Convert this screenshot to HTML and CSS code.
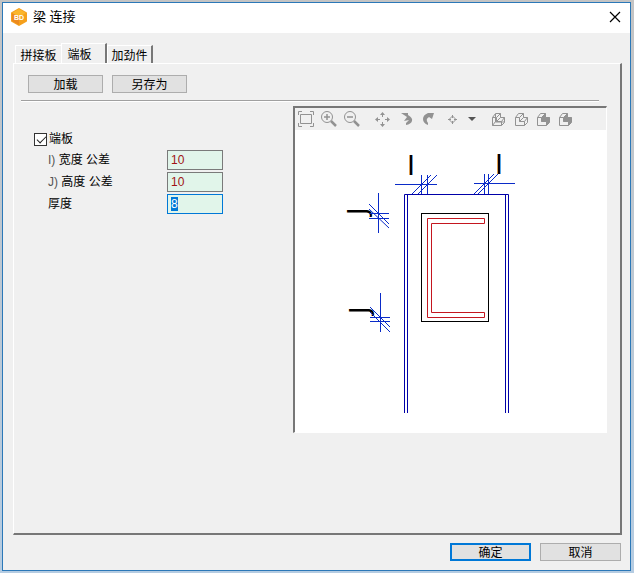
FILE: index.html
```
<!DOCTYPE html>
<html lang="zh-CN">
<head>
  <meta charset="UTF-8">
  <meta name="viewport" content="width=device-width, initial-scale=1.0">
  <title>梁 连接</title>
  <link rel="stylesheet" href="styles.css">
</head>
<body>
  <form class="window">
    <header class="titlebar">
      <svg class="logo" width="16" height="18" viewBox="0 0 16 18">
        <path d="M8 1 L15 5 V13 L8 17 L1 13 V5 Z" fill="#f5a01c" stroke="#f5a01c" stroke-width="2" stroke-linejoin="round"/>
        <path d="M8 1 L15 5 L8 9 L1 5 Z" fill="#fbb62c"/>
        <path d="M1 5 L8 9 V17 L1 13 Z" fill="#ec8a1e"/>
        <text x="8" y="12" text-anchor="middle" class="logo-text">BD</text>
      </svg>
      <h1>梁 连接</h1>
      <button type="button" class="close" aria-label="关闭">
        <svg width="12" height="12" viewBox="0 0 12 12"><path d="M1 1 L11 11 M11 1 L1 11" stroke="#000" stroke-width="1.2"/></svg>
      </button>
    </header>

    <nav class="tabs">
      <button type="button" class="tab">拼接板</button>
      <button type="button" class="tab active">端板</button>
      <button type="button" class="tab last">加劲件</button>
    </nav>

    <main class="panel">
      <div class="actions">
        <button type="button" class="btn">加载</button>
        <button type="button" class="btn">另存为</button>
      </div>
      <hr>
      <div class="content">
        <div class="fields">
          <label class="check"><input type="checkbox" checked>端板</label>
          <div class="field">
            <label for="width"><span>I)</span> 宽度 公差</label>
            <input type="text" id="width" value="10">
          </div>
          <div class="field">
            <label for="height"><span>J)</span> 高度 公差</label>
            <input type="text" id="height" value="10">
          </div>
          <div class="field">
            <label for="thickness">厚度</label>
            <input type="text" id="thickness" class="current" value="8" autofocus>
          </div>
        </div>

        <section class="viewer">
          <div class="tools">
            <svg width="312" height="22" viewBox="0 0 312 22" fill="none" stroke="#929292">
              <defs>
                <path id="block" d="M0 4 h4 v4 h5 v4 h-9 Z M0 4 l3 -4 h5 v4 h4 v5 l-3 3 M4 4 l4 -4 M4 8 l4 -4 M9 8 l3 -4"/>
                <path id="block-side" d="M4 4 l4 -4 v4 h4 v5 l-3 3 v-4 h-5 Z" fill="#929292" stroke="none"/>
              </defs>
              <!-- zoom to fit -->
              <path d="M5.5 6.5 h11 v9 h-11 Z M3.5 7 v-3.5 h3.5 M15 3.5 h3.5 v3.5 M18.5 15 v3.5 h-3.5 M7 18.5 h-3.5 v-3.5"/>
              <!-- zoom in, zoom out -->
              <circle cx="32" cy="9" r="5.5"/>
              <path d="M29 9 h6 M32 6 v6" stroke-width="1.5"/>
              <path d="M36 13 l5 5" stroke-width="2.5"/>
              <circle cx="55" cy="9" r="5.5"/>
              <path d="M52 9 h6" stroke-width="1.5"/>
              <path d="M59 13 l5 5" stroke-width="2.5"/>
              <!-- pan -->
              <path d="M87.5 5 v4 M87.5 14 v4 M82 11.5 h3 M90 11.5 h3"/>
              <path d="M85 7 l2.5 -3 l2.5 3 Z M85 16 l2.5 3 l2.5 -3 Z M83 9 l-3 2.5 l3 2.5 Z M92 9 l3 2.5 l-3 2.5 Z" fill="#929292" stroke="none"/>
              <!-- rotate -->
              <path d="M106 5 h7 v2 q5 3 4 6 q-1 3 -6 4 v-2 l3 -3 l-5 1 l3 -4 Z" fill="#929292" stroke="none"/>
              <path d="M139 5 h-6 q-5 2 -5 6 q0 4 5 6 v-2 q-3 -4 1 -6 l3 2 Z" fill="#929292" stroke="none"/>
              <!-- centre point -->
              <path d="M157.5 7 v3 M157.5 13 v3 M153 11.5 h3 M159 11.5 h3 M157.5 8 l3.5 3.5 l-3.5 3.5 l-3.5 -3.5 Z"/>
              <path d="M173 9 h8 l-4 4 Z" fill="#555" stroke="none"/>
              <!-- view modes -->
              <use href="#block" x="197.5" y="5.5"/>
              <path d="M200.5 6 v8 h9 M197.5 17.5 l3 -4"/>
              <use href="#block" x="220.5" y="5.5"/>
              <use href="#block" x="242.5" y="5.5"/>
              <use href="#block-side" x="242.5" y="5.5"/>
              <use href="#block" x="264.5" y="5.5"/>
              <use href="#block-side" x="264.5" y="5.5"/>
            </svg>
          </div>
          <svg class="drawing" width="312" height="302" viewBox="0 0 312 302" fill="none">
            <g class="marks">
              <text x="112" y="45">I</text>
              <text x="200" y="44">I</text>
              <text class="side" transform="translate(72 85) rotate(-90)">J</text>
              <text class="side" transform="translate(74 184) rotate(-90)">J</text>
            </g>
            <!-- column -->
            <path d="M109.5 283 V64.5 H213.5 V283 M112.5 64 V283 M210.5 64 V283" stroke="#0000a8"/>
            <!-- end plate -->
            <rect x="126.5" y="83.5" width="67" height="108" stroke="#000"/>
            <!-- channel section -->
            <path d="M132.5 88.5 H189.5 V93.5 H136.5 V182.5 H189.5 V187.5 H132.5 Z" stroke="#c4161f"/>
            <!-- dimension marks -->
            <g stroke="#0a2bc8">
              <path d="M100 54.5 H142 M126.5 45 V64 M132.5 45 V64 M117 64 L136 45 M123 64 L142 45"/>
              <path d="M179 53.5 H220 M189.5 44 V64 M193.5 44 V64 M179 64 L199 44 M183 64 L203 44"/>
              <path d="M83.5 63 V103 M74 83.5 H94 M74 88.5 H94 M74 74 L94 94 M74 79 L94 98"/>
              <path d="M85.5 163 V202 M75 187.5 H95 M75 191.5 H95 M75 177 L95 197 M75 182 L95 202"/>
            </g>
          </svg>
        </section>
      </div>
    </main>

    <footer class="footer">
      <button type="submit" class="btn ok">确定</button>
      <button type="button" class="btn">取消</button>
    </footer>
  </form>

  <script>
    document.getElementById("thickness").select();
  </script>
</body>
</html>
```

FILE: styles.css
```
* {
  box-sizing: border-box;
}

body {
  margin: 0;
  padding: 2px 3px 2px 2px;
  background: linear-gradient(#c4c4c4, #b5cce2);
  font: 12px/16px "Liberation Sans", "Noto Sans CJK SC", sans-serif;
  color: #000;
}

button,
input {
  font: inherit;
  color: inherit;
}

.window {
  display: flex;
  flex-direction: column;
  min-height: calc(100vh - 4px);
  background: #f0f0f0;
  border: 1px solid #2b78b8;
}

.titlebar {
  display: flex;
  align-items: center;
  gap: 6px;
  height: 30px;
  padding: 0 7px 2px 8px;
  background: #fff;
}

.titlebar h1 {
  flex: 1;
  margin: 0;
  font-size: 13px;
  font-weight: normal;
}

.logo-text {
  font: bold 7px "Liberation Sans", sans-serif;
  fill: #fff;
}

.close {
  display: flex;
  padding: 2px;
  border: 0;
  background: none;
}

.tabs {
  display: flex;
  align-items: flex-end;
  height: 30px;
  padding: 0 12px;
}

.tab {
  height: 18px;
  width: 46px;
  padding: 2px 0 0;
  border: 1px solid #fff;
  border-width: 1px 0 0 1px;
  background: #f0f0f0;
  line-height: 16px;
  white-space: nowrap;
}

.tab.active {
  height: 20px;
  padding-right: 8px;
  border-right: 2px solid #777;
}

.tab.last {
  border-right: 2px solid #777;
}

.panel {
  flex: 1;
  margin: 0 8px 0 10px;
  padding: 11px 13px 11px 14px;
  border: 1px solid #fff;
  border-right: 2px solid #777;
  border-bottom: 2px solid #777;
}

.actions {
  display: flex;
  gap: 9px;
}

.btn {
  width: 75px;
  height: 18px;
  padding: 1px 0 0;
  border: 1px solid #adadad;
  background: #e1e1e1;
  line-height: 16px;
}

hr {
  height: 2px;
  margin: 7px 8px 4px -7px;
  border: 0;
  border-top: 1px solid #a0a0a0;
  border-bottom: 1px solid #fff;
}

.content {
  display: flex;
}

.fields {
  display: flex;
  flex-direction: column;
  gap: 2px;
  width: 265px;
  padding: 24px 0 0 6px;
}

.check {
  display: flex;
  align-items: center;
  gap: 2px;
  height: 18px;
}

.check input {
  appearance: none;
  width: 13px;
  height: 13px;
  margin: 0;
  border: 1px solid #333;
  background: #fff;
}

.check input:checked::after {
  content: "";
  display: block;
  width: 4px;
  height: 8px;
  margin-left: 4px;
  border: solid #222;
  border-width: 0 1px 1px 0;
  transform: rotate(45deg);
}

.field {
  display: flex;
  align-items: center;
  padding-left: 14px;
}

.field label {
  width: 119px;
}

.field span {
  color: #555;
}

.field input {
  width: 56px;
  height: 20px;
  padding: 0 3px;
  border: 1px solid #7a7a7a;
  border-radius: 0;
  outline: 0;
  background: #e1f5ea;
  color: #a01414;
}

.field .current {
  border-color: #0078d7;
}

.field input::selection {
  background: #0078d7;
  color: #fff;
}

.viewer {
  flex: 1;
  border: 1px solid #fff;
  border-top: 2px solid #777;
  border-left: 2px solid #777;
  background: #fff;
  overflow: hidden;
}

.tools {
  height: 22px;
  background: #f0f0f0;
}

.tools svg,
.drawing {
  display: block;
}

.marks text {
  font: 27px "DejaVu Sans", sans-serif;
  fill: #000;
}

.marks .side {
  font-family: "Noto Sans", sans-serif;
}

.footer {
  display: flex;
  justify-content: flex-end;
  gap: 9px;
  padding: 8px 9px 9px;
}

.footer .btn {
  width: 81px;
}

.footer .ok {
  padding: 0;
  border: 2px solid #0078d7;
}
```
